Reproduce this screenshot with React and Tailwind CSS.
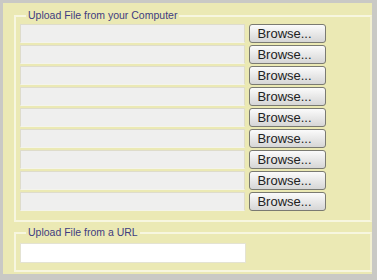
const rows = Array.from({ length: 9 });

function BrowseButton() {
  return (
    <button className="w-[77px] h-[19px] shrink-0 rounded-[3px] border border-[#7a7a72] bg-gradient-to-b from-[#fbfbfb] to-[#d6d6d6] pr-[6px] text-[13px] leading-[17px] text-[#222]">
      Browse...
    </button>
  );
}

export default function App() {
  return (
    <div
      className="w-[377px] h-[280px] bg-[#c9c9c5] pt-[3px] pl-[3px]"
      style={{ fontFamily: '"Liberation Sans", Arial, sans-serif' }}
    >
      <div className="w-[369px] h-[271px] bg-[#ebe9b4] pl-[11px] pt-[6px] flex flex-col">
        <fieldset className="w-[358px] border-2 border-[#f7f6df] border-r-[#f2f0d0] pl-[4px] pb-[9px] pt-[2px] m-0">
          <legend className="ml-[6px] px-[2px] text-[10.5px] leading-[13px] text-[#3e3c80]">
            Upload File from your Computer
          </legend>
          <div className="flex flex-col gap-[2px]">
            {rows.map((_, i) => (
              <div key={i} className="flex items-center gap-[4px]">
                <input
                  type="text"
                  className="w-[225px] h-[19px] bg-[#efefee] border border-[#dedccb] border-b-[#f4f4ea] outline-none"
                />
                <BrowseButton />
              </div>
            ))}
          </div>
        </fieldset>
        <fieldset className="w-[358px] mt-[4px] border-2 border-[#f7f6df] border-r-[#f2f0d0] pl-[4px] pb-[5px] pt-[2px] m-0">
          <legend className="ml-[6px] px-[2px] text-[10.5px] leading-[13px] text-[#3e3c80]">
            Upload File from a URL
          </legend>
          <input
            type="text"
            className="w-[226px] h-[20px] bg-white border border-[#e4e3d2] outline-none"
          />
        </fieldset>
      </div>
    </div>
  );
}
